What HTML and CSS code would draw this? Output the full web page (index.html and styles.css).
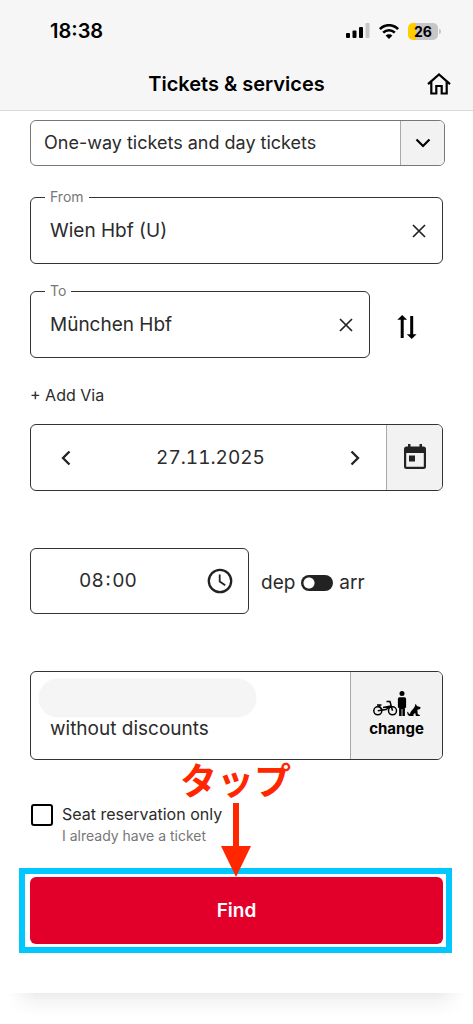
FILE: index.html
```html
<!DOCTYPE html>
<html lang="en">
<head>
<meta charset="utf-8">
<meta name="viewport" content="width=device-width, initial-scale=1">
<title>Tickets &amp; services</title>
<link rel="stylesheet" href="styles.css">
</head>
<body>
<header class="header">
  <div class="status">
    <span class="clock">18:38</span>
    <div class="status-icons">
      <svg width="24" height="16" viewBox="0 0 24 16" aria-hidden="true">
        <rect x="0" y="10" width="4" height="5" rx="1"/>
        <rect x="6.500" y="7.500" width="4" height="7.500" rx="1"/>
        <rect x="13" y="4" width="4" height="11" rx="1"/>
        <rect x="19.500" y="0" width="4" height="15" rx="1" fill="#c6c6c6"/>
      </svg>
      <svg width="20" height="15" viewBox="0 0 20 15" aria-hidden="true">
        <g fill="none" stroke="#000" stroke-width="2.600">
          <path d="M.9 5.200C6-.1 14-.1 19.100 5.200"/>
          <path d="M4.200 8.700c3.300-3.300 8.300-3.300 11.600 0"/>
        </g>
        <path d="M10 15 6.600 11.500c1.900-1.800 4.900-1.800 6.800 0z"/>
      </svg>
      <span class="battery"><span class="battery-body">26</span><span class="battery-tip"></span></span>
    </div>
  </div>
  <div class="titlebar">
    <h1 class="title">Tickets &amp; services</h1>
    <button class="plain home" type="button" aria-label="Home">
      <svg width="24" height="22" viewBox="0 0 24 22" fill="none" stroke="#000" stroke-width="2.200" aria-hidden="true">
        <path d="M1 11.200 12 1.500l11 9.700M4.300 9v11.500h5V13h5.400v7.500h5V9"/>
      </svg>
    </button>
  </div>
</header>

<main>
  <form class="search">
    <div class="box product">
      <select class="product-select" aria-label="Ticket type"><option>One-way tickets and day tickets</option></select>
      <span class="side product-side">
        <svg width="16" height="10" viewBox="0 0 16 10" fill="none" stroke="#000" stroke-width="2.200" aria-hidden="true"><path d="m1.500 1.500 6.500 6.500 6.500-6.500"/></svg>
      </span>
    </div>

    <div class="box field">
      <label class="field-label" for="from">From</label>
      <input class="text" id="from" type="text" value="Wien Hbf (U)">
      <button class="plain" type="button" aria-label="Clear from">
        <svg width="14" height="14" viewBox="0 0 14 14" stroke="#222" stroke-width="1.700" aria-hidden="true"><path d="m1 1 12 12M13 1 1 13"/></svg>
      </button>
    </div>

    <div class="row">
      <div class="box field">
        <label class="field-label" for="to">To</label>
        <input class="text" id="to" type="text" value="München Hbf">
        <button class="plain" type="button" aria-label="Clear to">
          <svg width="14" height="14" viewBox="0 0 14 14" stroke="#222" stroke-width="1.700" aria-hidden="true"><path d="m1 1 12 12M13 1 1 13"/></svg>
        </button>
      </div>
      <button class="plain swap" type="button" aria-label="Swap from and to">
        <svg width="20" height="24" viewBox="0 0 20 24" aria-hidden="true">
          <path d="M3.700 23V4.800H.300L5.200 0l4.900 4.800H6.700V23zM13.200 1v18.200H9.800l4.900 4.800 4.900-4.800h-3.400V1z"/>
        </svg>
      </button>
    </div>

    <button class="plain via" type="button">+ Add Via</button>

    <div class="box date">
      <div class="date-main">
        <button class="plain" type="button" aria-label="Previous day">
          <svg width="10" height="16" viewBox="0 0 10 16" fill="none" stroke="#222" stroke-width="2.300" aria-hidden="true"><path d="M8.500 1.500 2 8l6.500 6.500"/></svg>
        </button>
        <input class="text digits" type="text" aria-label="Date" value="27.11.2025">
        <button class="plain" type="button" aria-label="Next day">
          <svg width="10" height="16" viewBox="0 0 10 16" fill="none" stroke="#222" stroke-width="2.300" aria-hidden="true"><path d="M1.500 1.500 8 8l-6.500 6.500"/></svg>
        </button>
      </div>
      <button class="side date-side" type="button" aria-label="Open calendar">
        <svg width="22" height="25" viewBox="0 0 22 25" fill="#222" aria-hidden="true">
          <path fill-rule="evenodd" d="M4 0h2.500v2.500h9V0H18v2.500h1.500A2.500 2.500 0 0 1 22 5v17.500a2.500 2.500 0 0 1-2.500 2.500h-17A2.500 2.500 0 0 1 0 22.500V5a2.500 2.500 0 0 1 2.500-2.500H4zM2.200 9v13.700h17.600V9z"/>
          <path d="M5 11.500h6v6H5z"/>
        </svg>
      </button>
    </div>

    <div class="row time-row">
      <div class="box time">
        <input class="text digits" type="text" aria-label="Time" value="08&#8202;:&#8202;00">
        <button class="plain" type="button" aria-label="Choose time">
          <svg width="26" height="26" viewBox="0 0 26 26" fill="none" stroke="#222" aria-hidden="true">
            <circle cx="13" cy="13" r="11.200" stroke-width="2.300"/><path d="M12.700 6.500v7l5.500 3.800" stroke-width="1.800"/>
          </svg>
        </button>
      </div>
      <label class="mode"><span>dep</span><input class="toggle" type="checkbox" role="switch"><span>arr</span></label>
    </div>

    <div class="box passengers">
      <div class="passenger">
        <span class="name-mask"></span>
        <span class="discount">without discounts</span>
      </div>
      <button class="side change" type="button">
        <svg width="48" height="26" viewBox="0 0 48 26" aria-hidden="true">
          <g fill="none" stroke="#000" stroke-width="1.500">
            <circle cx="4.800" cy="19.800" r="4"/><circle cx="19.500" cy="19.800" r="4"/>
            <path d="M4.800 19.800 13 18.500l5-3.500M5.800 14.500l4 5M4 14h4.500M19.500 19.800 17 10.500h-3.500M18 15l-8 1.500"/>
          </g>
          <circle cx="29" cy="2.500" r="2.500"/>
          <path d="M26.500 6.200h5a1.600 1.600 0 0 1 1.600 1.600v9h-1.200V25h-2.500v-7h-.8v7h-2.500v-8.200h-1.200v-9a1.600 1.600 0 0 1 1.600-1.600z"/>
          <path d="m42.600 12.700 1.400 2.300 3.600 1.300-.5 1.700-2.700.8.300 4.300 2.200 1.100v.8h-4l-.8-3.200-2 2.200.8 1h-4.300c-1.500-.4-2.400-1.800-2.400-4l.9-.2c.3 1.600.9 2.200 1.900 2.200.5-3.600 3.900-4.700 4.800-7.700z"/>
        </svg>
        <span>change</span>
      </button>
    </div>

    <div class="seat">
      <input class="check" id="seat" type="checkbox" aria-describedby="seat-note">
      <div class="seat-text">
        <label for="seat">Seat reservation only</label>
        <span class="note" id="seat-note">I already have a ticket</span>
      </div>
    </div>

    <div class="highlight">
      <button class="find" type="submit">Find</button>
      <div class="callout">
        <span class="callout-text" lang="ja">タップ</span>
        <svg width="30" height="74" viewBox="0 0 30 74" fill="#ff2600" aria-hidden="true"><path d="M12 0h6v43h12L15 74 0 43h12z"/></svg>
      </div>
    </div>
  </form>
  <div class="card-shadow"></div>
</main>
</body>
</html>
```

FILE: styles.css
```css
* { box-sizing: border-box; }

body {
  margin: 0;
  background: #fff;
  color: #2b2b2b;
  font-family: Inter, "Noto Sans CJK JP", sans-serif;
  font-size: 19px;
  line-height: 24px;
}

button, input, select { font: inherit; color: inherit; }
svg { display: block; flex: none; }

.header {
  background: #f6f6f6;
  border-bottom: 1px solid #d9d9d9;
  color: #000;
}

.status {
  display: flex;
  align-items: center;
  justify-content: space-between;
  height: 62px;
  padding: 0 32px 0 50px;
}
.clock { font-size: 20px; font-weight: 600; }
.status-icons { display: flex; align-items: center; gap: 9px; }
.battery { display: flex; align-items: center; gap: 1px; }
.battery-body {
  width: 30px;
  height: 17px;
  border-radius: 5px;
  background: linear-gradient(90deg, #ffcc00 8px, #c6c6c6 8px);
  font-size: 14px;
  font-weight: 700;
  line-height: 17px;
  text-align: center;
}
.battery-tip { width: 2px; height: 5px; border-radius: 0 2px 2px 0; background: #c6c6c6; }

.titlebar {
  display: grid;
  grid-template-columns: 24px 1fr 24px;
  align-items: center;
  height: 48px;
  padding: 0 22px 4px;
}
.title {
  grid-column: 2;
  margin: 0;
  font-size: 20px;
  font-weight: 600;
  line-height: 24px;
  text-align: center;
}

.plain { border: 0; padding: 0; background: none; cursor: pointer; }

.search { padding: 9px 30px 40px; }

.box {
  display: flex;
  align-items: stretch;
  border: 1px solid #333;
  border-radius: 6px;
  background: #fff;
}
.side {
  display: flex;
  align-items: center;
  justify-content: center;
  flex: none;
  border: 0;
  border-left: 1px solid #aaa;
  border-radius: 0 5px 5px 0;
  padding: 0;
  background: #f2f2f2;
}

.product { height: 46px; margin-right: -2px; border-color: #777; }
.product-select {
  flex: 1;
  min-width: 0;
  appearance: none;
  border: 0;
  padding: 0 13px;
  background: none;
  font-size: 18px;
}
.product-side { width: 44px; }

.text {
  flex: 1;
  min-width: 0;
  width: 100%;
  border: 0;
  padding: 0;
  background: none;
}
.digits { text-align: center; font-variant-numeric: tabular-nums; }

.field {
  position: relative;
  flex: 1;
  align-items: center;
  height: 67px;
  padding: 0 16px 0 19px;
}
.product + .field { margin-top: 31px; }
.field-label {
  position: absolute;
  top: -10px;
  left: 14px;
  padding: 0 5px;
  background: #fff;
  color: #777;
  font-size: 14px;
  line-height: 18px;
}

.row { display: flex; align-items: center; margin-top: 27px; }
.swap { display: flex; justify-content: center; width: 73px; padding-top: 4px; }

.via { display: block; margin: 25px 0 17px; font-size: 16px; }

.date { height: 67px; }
.date-main { display: flex; align-items: center; flex: 1; min-width: 0; padding: 0 26px 0 30px; }
.date-side { width: 56px; padding-bottom: 2px; }

.time-row { margin-top: 57px; gap: 12px; }
.time { flex: none; width: 219px; height: 66px; padding: 0 15px 0 0; align-items: center; }
.time .digits { padding-right: 22px; }
.time .plain { flex: none; }
.mode { display: flex; align-items: center; gap: 6px; padding-top: 4px; }
.toggle {
  appearance: none;
  width: 32px;
  height: 16px;
  margin: 0;
  border-radius: 8px;
  background: radial-gradient(circle at 8px 8px, #fff 5px, #222 6px);
}

.passengers { height: 89px; margin-top: 57px; }
.passenger { flex: 1; min-width: 0; padding: 7px 8px 0; }
.name-mask {
  display: block;
  width: 217px;
  max-width: 100%;
  height: 38px;
  border-radius: 19px;
  background: #f5f5f5;
  box-shadow: 0 0 2px #f0f0f0;
}
.discount { display: block; padding-left: 11px; }
.change {
  flex-direction: column;
  width: 92px;
  color: #000;
  font-size: 15px;
  font-weight: 700;
  line-height: 24px;
}

.seat { display: flex; gap: 9px; margin: 42px 0 0 1px; }
.check {
  appearance: none;
  flex: none;
  width: 22px;
  height: 22px;
  margin: 2px 0 0;
  border: 2px solid #000;
  border-radius: 3px;
}
.seat-text { display: flex; flex-direction: column; font-size: 16px; }
.note { color: #777; font-size: 14px; line-height: 20px; }

.highlight {
  position: relative;
  margin: 22px -9px 0 -11px;
  border: 6px solid #00c8ff;
  padding: 3px 3px 3px 5px;
}
.find {
  display: block;
  width: 100%;
  height: 67px;
  border: 0;
  border-radius: 6px;
  background: #e2002a;
  color: #fff;
  font-weight: 600;
}
.callout {
  position: absolute;
  right: 0;
  bottom: 70px;
  left: 0;
  display: flex;
  flex-direction: column;
  align-items: center;
  gap: 2px;
  pointer-events: none;
}
.callout-text {
  color: #ff2600;
  font-family: "Noto Sans CJK JP", sans-serif;
  font-size: 37px;
  font-weight: 700;
  line-height: 44px;
}

.card-shadow {
  height: 24px;
  margin: 0 8px;
  background: linear-gradient(#ececec, #f7f7f7 40%, #fff);
  mask-image: linear-gradient(90deg, transparent, #000 28px, #000 calc(100% - 28px), transparent);
}
```
